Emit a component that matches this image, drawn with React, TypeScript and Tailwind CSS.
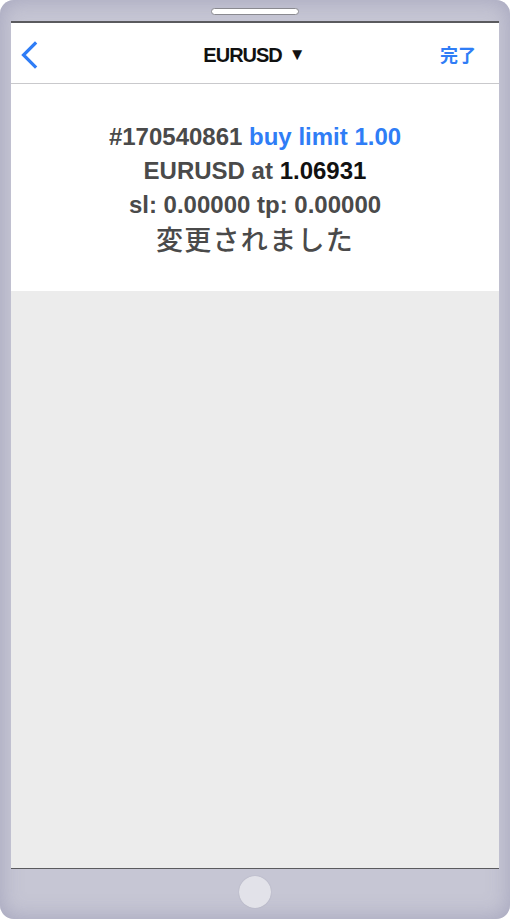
import React from "react";

const SANS = "font-['Liberation_Sans','Noto_Sans_CJK_JP',sans-serif]";

function BackChevron() {
  return (
    <svg width="18" height="28" viewBox="0 0 18 28" fill="none">
      <path d="M15 2.5 L3.5 14 L15 25.5" stroke="#2f7df6" strokeWidth="3.2" strokeLinecap="square" strokeLinejoin="miter" />
    </svg>
  );
}

export default function App() {
  return (
    <div className="w-[510px] h-[919px] bg-white">
      <div className="w-[510px] h-[919px] rounded-[14px] bg-[#c6c6d4] shadow-[inset_0_0_22px_rgba(160,160,185,0.9)] flex flex-col">
        {/* Speaker */}
        <div className="pt-[8px] flex justify-center">
          <div className="w-[88px] h-[7px] rounded-full bg-white border border-[#8a8a90]" />
        </div>

        {/* Screen */}
        <div className="mx-[11px] mt-[6px] h-[848px] border-t-2 border-b border-t-[#5a5a5e] border-b-[#5a5a5e] bg-[#ececec] flex flex-col">
          {/* Nav bar */}
          <div className="h-[61px] bg-white border-b border-[#c9c9cc] flex items-center justify-between pl-[9px] pr-[11px] pt-[3px]">
            <div className="w-[60px] flex items-center">
              <BackChevron />
            </div>
            <div className={`${SANS} text-[20px] font-bold text-[#111] tracking-[-1px] flex items-center gap-[7px]`}>
              <span>EURUSD</span>
              <span className="text-[17px]">▼</span>
            </div>
            <div className="w-[60px] flex justify-end pr-[12px]">
              <span className="font-['Noto_Sans_CJK_JP',sans-serif] text-[18px] font-bold text-[#2f7df6]">完了</span>
            </div>
          </div>

          {/* Message */}
          <div className={`${SANS} h-[207px] bg-white flex flex-col items-center pt-[36px] text-[24px] font-bold leading-[34px] text-[#4a4a4a]`}>
            <div>
              #170540861 <span className="text-[#2f7df6]">buy limit 1.00</span>
            </div>
            <div>
              EURUSD at <span className="text-[#111]">1.06931</span>
            </div>
            <div>sl: 0.00000 tp: 0.00000</div>
            <div className="font-['Noto_Sans_CJK_JP',sans-serif] font-medium text-[27px] leading-[33px] tracking-[1.3px]">変更されました</div>
          </div>
        </div>

        {/* Home button */}
        <div className="flex justify-center pt-[7px]">
          <div className="w-[32px] h-[32px] rounded-full bg-[#e2e2e9] shadow-[0_0_1px_rgba(120,120,140,0.5)]" />
        </div>
      </div>
    </div>
  );
}
